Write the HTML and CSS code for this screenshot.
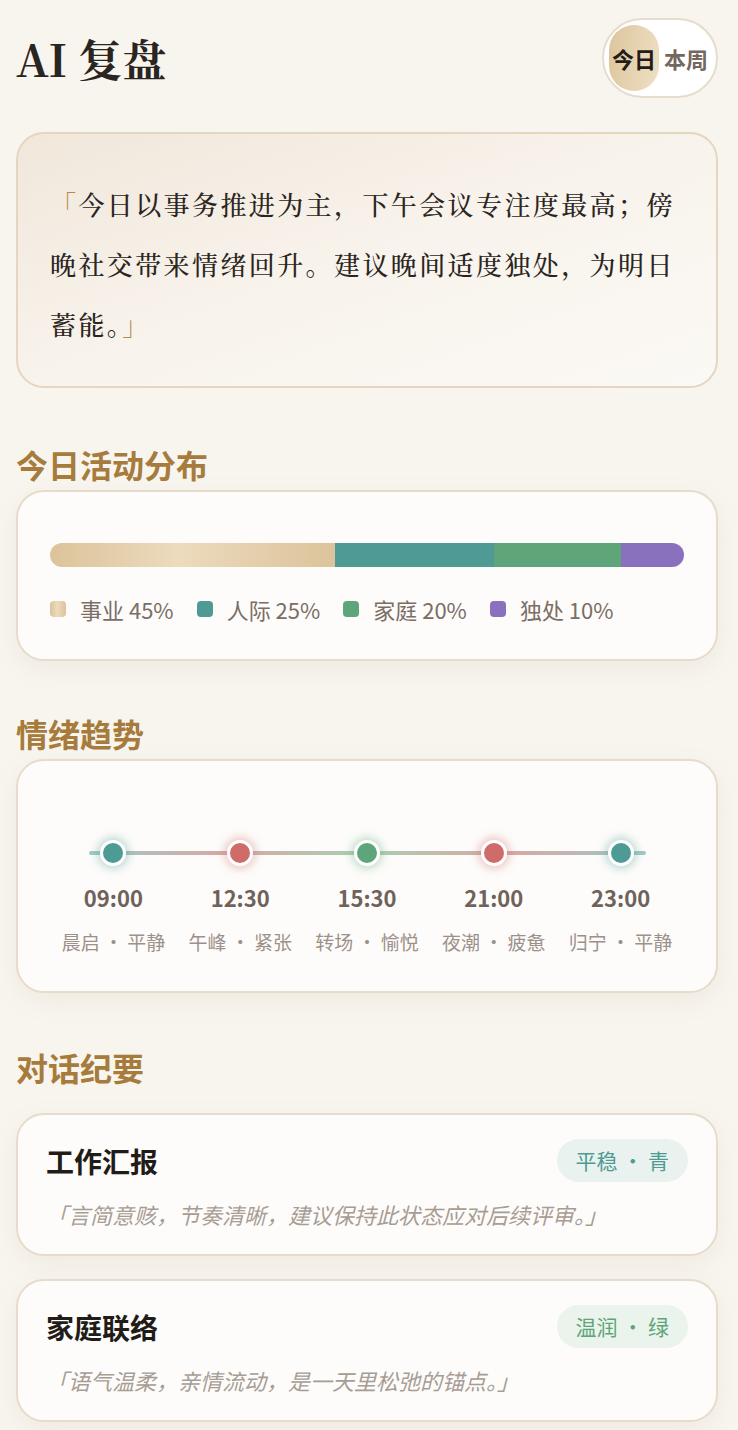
FILE: index.html
```html
<!DOCTYPE html>
<html lang="zh-CN">
<head>
    <meta charset="UTF-8">
    <meta name="viewport" content="width=device-width, initial-scale=1.0">
    <title>AI 复盘</title>
    <link rel="stylesheet" href="styles.css">
</head>
<body>
    <header class="top">
        <h1 class="title">AI 复盘</h1>
        <div class="toggle">
            <button class="toggle-btn active">今日</button>
            <button class="toggle-btn">本周</button>
        </div>
    </header>

    <section class="summary">
        <p><span class="mark">「</span>今日以事务推进为主，下午会议专注度最高；傍晚社交带来情绪回升。建议晚间适度独处，为明日蓄能。<span class="mark">」</span></p>
    </section>

    <h2 class="section-title">今日活动分布</h2>
    <section class="card activity">
        <div class="bar">
            <div class="seg career" style="width: 45%"></div>
            <div class="seg social" style="width: 25%"></div>
            <div class="seg family" style="width: 20%"></div>
            <div class="seg alone" style="width: 10%"></div>
        </div>
        <ul class="legend">
            <li><i class="swatch career"></i>事业 45%</li>
            <li><i class="swatch social"></i>人际 25%</li>
            <li><i class="swatch family"></i>家庭 20%</li>
            <li><i class="swatch alone"></i>独处 10%</li>
        </ul>
    </section>

    <h2 class="section-title mood-title">情绪趋势</h2>
    <section class="card mood">
        <div class="track">
            <div class="point"><span class="dot calm"></span><b>09:00</b><small>晨启 · 平静</small></div>
            <div class="point"><span class="dot tense"></span><b>12:30</b><small>午峰 · 紧张</small></div>
            <div class="point"><span class="dot happy"></span><b>15:30</b><small>转场 · 愉悦</small></div>
            <div class="point"><span class="dot tense"></span><b>21:00</b><small>夜潮 · 疲惫</small></div>
            <div class="point"><span class="dot calm"></span><b>23:00</b><small>归宁 · 平静</small></div>
        </div>
    </section>

    <h2 class="section-title talks-title">对话纪要</h2>
    <section class="talks">
        <article class="card talk">
            <div class="talk-head">
                <h3>工作汇报</h3>
                <span class="tag teal">平稳 · 青</span>
            </div>
            <p class="talk-note">「言简意赅，节奏清晰，建议保持此状态应对后续评审。」</p>
        </article>
        <article class="card talk">
            <div class="talk-head">
                <h3>家庭联络</h3>
                <span class="tag green">温润 · 绿</span>
            </div>
            <p class="talk-note">「语气温柔，亲情流动，是一天里松弛的锚点。」</p>
        </article>
    </section>
</body>
</html>
```

FILE: styles.css
```css
body {
    margin: 0;
    padding: 18px 20px 20px 16px;
    background: #f8f5ef;
    color: #2b2521;
    font-family: "Noto Sans CJK SC", "Noto Sans", sans-serif;
}
.top {
    display: flex;
    justify-content: space-between;
    align-items: center;
}
.title {
    margin: 0;
    font-family: "Noto Serif CJK SC", "Liberation Serif", serif;
    font-size: 44px;
    font-weight: 700;
    color: #2b2521;
}
.toggle {
    display: flex;
    padding: 5px;
    background: #fff;
    border: 2px solid #e6dccd;
    border-radius: 999px;
    gap: 2px;
}
.toggle-btn {
    font-family: "Noto Sans CJK SC", sans-serif;
    font-size: 22px;
    font-weight: 700;
    line-height: 26px;
    padding: 20px 3px;
    border: none;
    border-radius: 999px;
    background: transparent;
    color: #74675e;
}
.toggle-btn.active {
    background: linear-gradient(100deg, #dcc59c, #efe0c4);
    color: #221c18;
}

.summary {
    margin-top: 34px;
    padding: 40px 32px 32px;
    border: 2px solid #e4d6c0;
    border-radius: 28px;
    background: linear-gradient(160deg, #f1e7db 0%, #f8f3ec 50%, #fbf9f5 100%);
}
.summary p {
    margin: 0;
    font-family: "Noto Serif CJK SC", "Liberation Serif", serif;
    font-size: 26px;
    font-weight: 500;
    letter-spacing: 2.4px;
    line-height: 60px;
    color: #2b2521;
}
.mark {
    color: #b28a4c;
}

.section-title {
    margin: 56px 0 6px;
    font-size: 32px;
    font-weight: 700;
    line-height: 40px;
    color: #a67b3b;
}
.card {
    background: #fdfcfa;
    border: 2px solid #e7dccb;
    border-radius: 28px;
    box-shadow: 0 8px 26px rgba(140, 110, 70, 0.08);
}

.activity {
    padding: 51px 32px 35px;
}
.bar {
    display: flex;
    height: 24px;
    border-radius: 12px;
    overflow: hidden;
}
.career {
    background: linear-gradient(90deg, #dcc39b, #ecdbbd 45%, #dcc39b);
}
.social {
    background: #4f9a94;
}
.family {
    background: #5ea579;
}
.alone {
    background: #8a71be;
}
.legend {
    display: flex;
    gap: 23px;
    list-style: none;
    margin: 27px 0 0;
    padding: 0;
    font-size: 22px;
    line-height: 30px;
    color: #7a6e66;
}
.legend li {
    display: flex;
    align-items: center;
    gap: 14px;
}
.swatch {
    width: 16px;
    height: 16px;
    border-radius: 4px;
}

.mood-title {
    margin-top: 52px;
}
.mood {
    padding: 66px 32px 36px;
}
.track {
    position: relative;
    display: grid;
    grid-template-columns: repeat(5, 1fr);
}
.track::before {
    content: "";
    position: absolute;
    left: 39px;
    right: 38px;
    top: 24px;
    height: 4px;
    border-radius: 2px;
    background: linear-gradient(90deg, #9fcac5, #d7a9a6 25%, #a9d0b4 50%, #d8a7a4 75%, #9fcac5);
}
.point {
    position: relative;
    display: flex;
    flex-direction: column;
    align-items: center;
}
.dot {
    width: 20px;
    height: 20px;
    margin-top: 13px;
    border-radius: 50%;
    border: 3px solid #fff;
}
.dot.calm {
    background: #4e9a94;
    box-shadow: 0 0 8px 3px rgba(78, 154, 148, 0.35);
}
.dot.tense {
    background: #cf6b68;
    box-shadow: 0 0 8px 3px rgba(207, 107, 104, 0.35);
}
.dot.happy {
    background: #5ea579;
    box-shadow: 0 0 8px 3px rgba(94, 165, 121, 0.35);
}
.point b {
    margin-top: 17px;
    font-size: 22px;
    line-height: 28px;
    color: #6e625b;
}
.point small {
    margin-top: 18px;
    font-size: 19px;
    line-height: 26px;
    color: #9c918a;
}

.talks-title {
    margin-top: 54px;
    margin-bottom: 26px;
}
.talks {
    display: flex;
    flex-direction: column;
    gap: 23px;
}
.talk {
    padding: 24px 28px 24px;
}
.talk-head {
    display: flex;
    justify-content: space-between;
    align-items: center;
}
.talk-head h3 {
    margin: 0;
    font-size: 28px;
    font-weight: 700;
    color: #221c18;
}
.tag {
    padding: 7px 19px;
    border-radius: 999px;
    font-size: 21px;
    line-height: 29px;
}
.tag.teal {
    background: #eaf2ef;
    color: #4e9a94;
}
.tag.green {
    background: #eaf3ec;
    color: #5ea579;
}
.talk-note {
    margin: 16px 0 0;
    font-size: 22px;
    line-height: 32px;
    font-style: italic;
    color: #a89d95;
}
```
